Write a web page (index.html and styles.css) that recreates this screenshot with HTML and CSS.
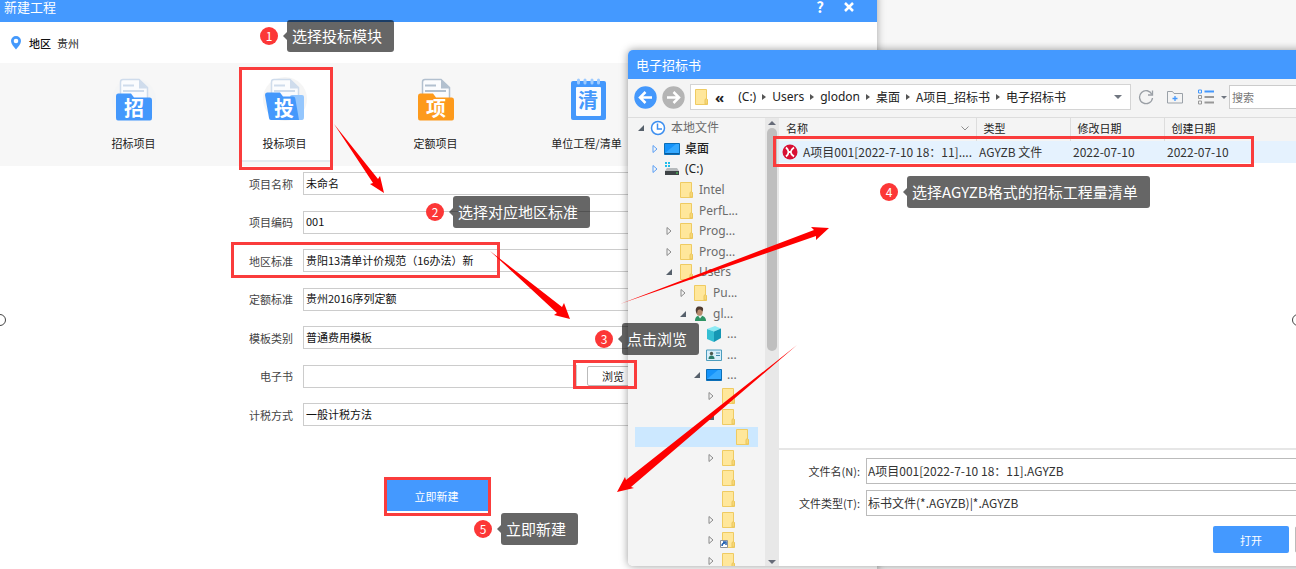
FILE: index.html
```html
<!DOCTYPE html>
<html lang="zh-CN">
<head>
<meta charset="utf-8">
<title>新建工程</title>
<link rel="stylesheet" href="styles.css">
</head>
<body>
<svg class="defs" aria-hidden="true">
  <symbol id="folder" viewBox="0 0 16 16">
    <path d="M2.500 .5h11v9.500l1 1v4.500h-12z" fill="#ffe79b" stroke="#efcb62"/>
    <path d="M12 15V10.500l1.200-.8 1.200.8V15z" fill="#f9d979" stroke="#eac65c"/>
  </symbol>
  <symbol id="screen" viewBox="0 0 16 16">
    <path d="M.5 2.500h15v11H.5z" fill="#1593fa" stroke="#0b6fb8"/>
    <path d="M1 12L12 3h3v9z" fill="#35a9ff"/>
    <path d="M1 12.500h14" stroke="#0a5c9e"/>
  </symbol>
  <symbol id="closed" viewBox="0 0 8 8"><path d="M2 .5v7L6 4z" fill="none" stroke="currentColor"/></symbol>
  <symbol id="opened" viewBox="0 0 8 8"><path d="M7 1v6H1z" fill="#56606b"/></symbol>
  <symbol id="page" viewBox="0 0 46 44">
    <path d="M9.500 24V5q0-2.500 2.500-2.500h16l8.500 8V26" fill="#fbfcfe" stroke="currentColor" stroke-width="1.500"/>
    <path d="M28 2l9 9.500h-9z" fill="currentColor"/>
    <path d="M12 8.500h11M12 14h21" stroke="currentColor" stroke-width="2"/>
  </symbol>
</svg>

<main class="desktop">
  <section class="window project">
    <header class="titlebar">
      <h1>新建工程</h1>
      <button class="help" type="button">?</button>
      <button class="close" type="button" aria-label="关闭">
        <svg width="10" height="10" viewBox="0 0 10 10"><path d="M1 1l8 8M9 1L1 9" stroke="#fff" stroke-width="2.500"/></svg>
      </button>
    </header>
    <div class="region">
      <svg width="10" height="14" viewBox="0 0 10 14"><path d="M5 0a5 5 0 0 1 5 5c0 3-3 6-5 8.500C3 11 0 8 0 5a5 5 0 0 1 5-5z" fill="#4499fc"/><circle cx="5" cy="5" r="2.300" fill="#fff"/></svg>
      <b>地区</b><span>贵州</span>
    </div>
    <nav class="kinds">
      <button class="kind" type="button">
        <svg width="46" height="46" viewBox="0 0 46 46">
          <circle cx="23" cy="23" r="22" fill="#f4f5f6"/>
          <g color="#cfdcec"><use href="#page" width="46" height="44"/></g>
          <path d="M5 19q0-2.500 2-2.500h13l3 4h16q2 0 2 2.500v18q0 2.500-2 2.500H7q-2 0-2-2.500z" fill="#4498fc"/>
          <text x="23" y="39" class="glyph">招</text>
        </svg>
        <span>招标项目</span>
      </button>
      <button class="kind active" type="button">
        <svg width="46" height="46" viewBox="0 0 46 46">
          <circle cx="23" cy="22" r="22" fill="#f5f5f5"/>
          <g color="#cfdcec"><use href="#page" width="46" height="44"/></g>
          <path d="M28 20q0-2 2-2h10q2 0 2 2v20q0 3-2 3H28z" fill="#94c6fd"/>
          <path d="M3 18q0-2.500 2-2.500h13l3 4h10q2 0 2.300 2L37 43H9q-2 0-2-2z" fill="#4498fc"/>
          <text x="22" y="39" class="glyph">投</text>
        </svg>
        <span>投标项目</span>
      </button>
      <button class="kind" type="button">
        <svg width="46" height="46" viewBox="0 0 46 46">
          <g color="#b2c0cf"><use href="#page" width="46" height="44"/></g>
          <path d="M5 19q0-2.500 2-2.500h13l3 4h16q2 0 2 2.500v18q0 2.500-2 2.500H7q-2 0-2-2.500z" fill="#fd9a1c"/>
          <text x="23" y="39" class="glyph">项</text>
        </svg>
        <span>定额项目</span>
      </button>
      <button class="kind" type="button">
        <svg width="46" height="46" viewBox="0 0 46 46">
          <rect x="7" y="4" width="35" height="39" rx="2" fill="#4498fc"/>
          <rect x="12" y="10" width="25" height="29" rx="1" fill="#fafcff"/>
          <path d="M14.500 3v3M21 3v3M28 3v3M34.500 3v3" stroke="#9ecbff" stroke-width="3" stroke-linecap="round"/>
          <text x="24" y="31" class="glyph blue">清</text>
        </svg>
        <span>单位工程/清单</span>
      </button>
    </nav>
    <form class="form">
      <div class="fields">
        <div class="field"><label for="name">项目名称</label><input id="name" type="text" value="未命名"></div>
        <div class="field"><label for="code">项目编码</label><input id="code" type="text" value="001"></div>
        <div class="field"><label for="area">地区标准</label><select id="area"><option>贵阳13清单计价规范（16办法）新</option></select></div>
        <div class="field"><label for="quota">定额标准</label><select id="quota"><option>贵州2016序列定额</option></select></div>
        <div class="field"><label for="template">模板类别</label><select id="template"><option>普通费用模板</option></select></div>
        <div class="field"><label for="book">电子书</label><input id="book" type="text"><button class="browse" type="button">浏览</button></div>
        <div class="field"><label for="tax">计税方式</label><select id="tax"><option>一般计税方法</option></select></div>
      </div>
      <button class="create" type="button">立即新建</button>
    </form>
  </section>

  <section class="window dialog">
    <header class="titlebar"><h2>电子招标书</h2></header>
    <div class="toolbar">
      <button type="button" aria-label="后退"><svg width="23" height="23" viewBox="0 0 23 23"><circle cx="11.500" cy="11.500" r="11.200" fill="#4498fc"/><path d="M18 11.500H6M11.500 6L6 11.500l5.500 5.500" fill="none" stroke="#fff" stroke-width="2.500"/></svg></button>
      <button type="button" aria-label="前进"><svg width="23" height="23" viewBox="0 0 23 23"><circle cx="11.500" cy="11.500" r="11.200" fill="#b4b4b4"/><path d="M5 11.500h12M11.500 6l5.500 5.500-5.500 5.500" fill="none" stroke="#fff" stroke-width="2.500"/></svg></button>
      <div class="path">
        <svg width="16" height="16"><use href="#folder"/></svg>
        <span class="more">«</span>
        <a class="latin" href="#">(C:)</a><i></i><a class="latin" href="#">Users</a><i></i><a class="latin" href="#">glodon</a><i></i><a href="#">桌面</a><i></i><a href="#">A项目_招标书</a><i></i><a href="#">电子招标书</a>
        <span class="drop"></span>
      </div>
      <div class="tools">
        <button type="button" aria-label="刷新"><svg width="16" height="16" viewBox="0 0 16 16"><path d="M14 5.500A6.500 6.500 0 1 0 14.500 9" fill="none" stroke="#9a9fa5" stroke-width="1.300"/><path d="M14.500 1.500v4.500H10" fill="none" stroke="#9a9fa5" stroke-width="1.300"/></svg></button>
        <button type="button" aria-label="新建文件夹"><svg width="16" height="14" viewBox="0 0 16 14"><path d="M.5 1.500h5l1.500 2h8.500v9.500H.5z" fill="none" stroke="#9aa1a8"/><path d="M8 6v5M5.500 8.500h5" stroke="#4498fc" stroke-width="1.300"/></svg></button>
        <button type="button" aria-label="视图"><svg width="16" height="16" viewBox="0 0 16 16"><path d="M.5 1h3v3h-3z" fill="none" stroke="#4498fc"/><path d="M6.500 2.500H16" stroke="#4498fc" stroke-width="2"/><path d="M.5 6.500h3v3h-3zM.5 12h3v3h-3z" fill="none" stroke="#989898"/><path d="M6.500 8H16M6.500 13.500H16" stroke="#989898" stroke-width="2"/></svg></button>
      </div>
      <span class="drop small"></span>
      <input class="search" type="text" placeholder="搜索" aria-label="搜索">
    </div>
    <div class="browser">
      <ul class="tree">
        <li><svg class="twist"><use href="#opened"/></svg><svg class="icon" viewBox="0 0 16 16"><circle cx="8" cy="8" r="6.500" fill="#fff" stroke="#3d8ff0" stroke-width="1.500"/><path d="M7.500 3.500V9H12" fill="none" stroke="#3d8ff0" stroke-width="1.500"/></svg>本地文件</li>
        <li class="l1"><svg class="twist blue"><use href="#closed"/></svg><svg class="icon"><use href="#screen"/></svg><b>桌面</b></li>
        <li class="l1"><svg class="twist blue"><use href="#closed"/></svg><svg class="icon" viewBox="0 0 16 16"><path d="M1 1h2v2H1zM4 1h2v2H4zM1 4h2v2H1zM4 4h2v2H4z" fill="#21bdea"/><path d="M3 7h10l2 3H1z" fill="#b6babc"/><path d="M1 10h14v4H1z" fill="#3f4447"/><path d="M12 12h2" stroke="#4ce05b"/></svg><span class="dark">(C:)</span></li>
        <li class="l2"><svg class="twist"></svg><svg class="icon"><use href="#folder"/></svg>Intel</li>
        <li class="l2"><svg class="twist"></svg><svg class="icon"><use href="#folder"/></svg>PerfL...</li>
        <li class="l2"><svg class="twist"><use href="#closed"/></svg><svg class="icon"><use href="#folder"/></svg>Prog...</li>
        <li class="l2"><svg class="twist"><use href="#closed"/></svg><svg class="icon"><use href="#folder"/></svg>Prog...</li>
        <li class="l2"><svg class="twist"><use href="#opened"/></svg><svg class="icon"><use href="#folder"/></svg>Users</li>
        <li class="l3"><svg class="twist"><use href="#closed"/></svg><svg class="icon"><use href="#folder"/></svg>Pu...</li>
        <li class="l3"><svg class="twist"><use href="#opened"/></svg><svg class="icon" viewBox="0 0 16 16"><path d="M3 15c0-4 2-5.500 5-5.500S14 11 14 15z" fill="#2f9465"/><path d="M6 9.500l2 3 2.500-3z" fill="#e8f3ee"/><ellipse cx="7.500" cy="5.500" rx="3.200" ry="4.300" fill="#b98a6d"/><path d="M4 6C3 2 5 0 8 .5s4 2 2.500 5C9 3 7 3 6 4c-1 1-.5 3-1 4z" fill="#4e3a30"/></svg>gl...</li>
        <li class="l4"><svg class="twist"></svg><svg class="icon" viewBox="0 0 16 16"><path d="M1 3l8-3 6 2.500-7 3z" fill="#8ceaf4"/><path d="M1 3l7 2.500V16l-7-3z" fill="#35bfd3"/><path d="M8 5.500l7-3V12l-7 4z" fill="#1597b4"/></svg>...</li>
        <li class="l4"><svg class="twist"></svg><svg class="icon" viewBox="0 0 16 16"><path d="M.5 3h15v10.500H.5z" fill="#d9effa" stroke="#4c9cbd"/><circle cx="5.500" cy="6.500" r="1.700" fill="#4e5a4f"/><path d="M2.500 12q0-3.500 3-3.500t3 3.500z" fill="#2b7c6b"/><path d="M10 6h4M10 8.500h4" stroke="#3d89ae"/></svg>...</li>
        <li class="l4"><svg class="twist"><use href="#opened"/></svg><svg class="icon"><use href="#screen"/></svg>...</li>
        <li class="l5"><svg class="twist"><use href="#closed"/></svg><svg class="icon"><use href="#folder"/></svg></li>
        <li class="l5"><svg class="twist"><use href="#opened"/></svg><svg class="icon"><use href="#folder"/></svg></li>
        <li class="l6 selected"><svg class="twist"></svg><svg class="icon"><use href="#folder"/></svg></li>
        <li class="l5"><svg class="twist"><use href="#closed"/></svg><svg class="icon"><use href="#folder"/></svg></li>
        <li class="l5"><svg class="twist"></svg><svg class="icon"><use href="#folder"/></svg></li>
        <li class="l5"><svg class="twist"></svg><svg class="icon"><use href="#folder"/></svg></li>
        <li class="l5"><svg class="twist"><use href="#closed"/></svg><svg class="icon"><use href="#folder"/></svg></li>
        <li class="l5"><svg class="twist"><use href="#closed"/></svg><svg class="icon" viewBox="0 0 16 16"><use href="#folder"/><path d="M.5 8.500h7v7h-7z" fill="#fff" stroke="#8c9299"/><path d="M2 14q0-3 3-3M3 10h3v3" fill="none" stroke="#2562b0" stroke-width="1.500"/></svg></li>
        <li class="l5"><svg class="twist"><use href="#closed"/></svg><svg class="icon"><use href="#folder"/></svg></li>
      </ul>
      <div class="scroll"><span class="up"></span><span class="track"><span class="thumb"></span></span><span class="down"></span></div>
      <div class="content">
        <div class="list">
          <table>
            <colgroup><col class="c-name"><col class="c-mid"><col class="c-mid"><col></colgroup>
            <thead><tr><th><span class="sort">名称<svg width="8" height="5" viewBox="0 0 8 5"><path d="M.5 .5L4 4 7.500 .5" fill="none" stroke="#8f8f8f"/></svg></span></th><th>类型</th><th>修改日期</th><th>创建日期</th></tr></thead>
            <tbody><tr><td><span class="file"><svg width="16" height="16" viewBox="0 0 16 16"><circle cx="8" cy="8" r="7.500" fill="#d80f35"/><path d="M4 3.500Q9 8 4 12.500M12 3.500Q5.500 8 12 12.500M5.500 8h3" fill="none" stroke="#fff" stroke-width="1.800"/></svg>A项目001[2022-7-10 18：11]....</span></td><td>AGYZB 文件</td><td>2022-07-10</td><td>2022-07-10</td></tr></tbody>
          </table>
        </div>
        <form class="footer">
          <div class="line"><label for="file">文件名(N):</label><input id="file" type="text" value="A项目001[2022-7-10 18：11].AGYZB"></div>
          <div class="line"><label for="type">文件类型(T):</label><select id="type"><option>标书文件(*.AGYZB)|*.AGYZB</option></select></div>
          <div class="actions"><button class="open" type="button">打开</button><button class="cancel" type="button" aria-label="取消"></button></div>
        </form>
      </div>
    </div>
  </section>

  <div class="frame f-kind"></div>
  <div class="frame f-area"></div>
  <div class="frame f-browse"></div>
  <div class="frame f-create"></div>
  <div class="frame f-file"></div>

  <svg class="arrows" width="1296" height="569" viewBox="0 0 1296 569" aria-hidden="true">
    <g fill="#fe0000">
      <path d="M334 124L378 179L380 176L384 193L370 184L373 183z"/>
      <path d="M490 251L562 307L564 303L570 319L554 315L557 313z"/>
      <path d="M620 304L814 230L811 227L829 228L816 240L816 236z"/>
      <path d="M797 345L631 487L634 488L617 492L625 477L626 480z"/>
    </g>
    <g fill="#fff" stroke="#444"><circle cx="0" cy="320" r="5.500"/><circle cx="1298" cy="320" r="5.500"/></g>
  </svg>

  <div class="note n1"><span class="num">1</span><span class="tip">选择投标模块</span></div>
  <div class="note n2"><span class="num">2</span><span class="tip">选择对应地区标准</span></div>
  <div class="note n3"><span class="num">3</span><span class="tip">点击浏览</span></div>
  <div class="note n4"><span class="num">4</span><span class="tip">选择AGYZB格式的招标工程量清单</span></div>
  <div class="note n5"><span class="num">5</span><span class="tip">立即新建</span></div>
</main>
</body>
</html>
```

FILE: styles.css
```css
* { box-sizing: border-box; }
html, body { height: 100%; }
body {
  margin: 0;
  overflow: hidden;
  background: #f7f7f7;
  color: #222;
  font: 12px/16px "Noto Sans CJK SC", "Noto Sans", sans-serif;
}
button, input, select { margin: 0; font: inherit; color: inherit; }
button { padding: 0; border: 0; background: none; }
svg { display: block; flex: none; }
a { color: inherit; text-decoration: none; }
.defs { position: absolute; width: 0; height: 0; }
.desktop { position: relative; height: 100%; overflow: hidden; }

.window { position: absolute; display: flex; flex-direction: column; background: #fff; }
.titlebar { display: flex; align-items: center; background: #4499ff; color: #fff; line-height: 14px; }
.titlebar h1, .titlebar h2 { flex: 1; margin: 0; font-size: 13px; font-weight: 400; }

/* new project window */
.project { top: -8px; bottom: -20px; left: 0; width: 877px; box-shadow: 0 0 8px rgba(0, 0, 0, .35); }
.project .titlebar { height: 30px; padding: 0 23px 0 4px; gap: 20px; }
.help { font-size: 15px; font-weight: 700; line-height: 14px; color: #fff; }
.region { display: flex; align-items: center; gap: 6px; height: 41px; padding-left: 11px; font-size: 11px; }
.region svg { margin-right: 2px; }
.region b { font-weight: 500; color: #111; }
.kinds { display: flex; gap: 60px; height: 103px; padding: 6px 88px 0; background: #f7f7f7; }
.kind {
  display: flex; flex-direction: column; align-items: center; gap: 12px;
  flex: none; width: 91px; height: 93px; padding-top: 8px;
  white-space: nowrap; border-bottom: 2px solid transparent;
}
.kind span { line-height: 16px; font-size: 11px; }
.kind.active { background: #fff; border-color: #e4eaef; }
.glyph { font-size: 20px; font-weight: 700; fill: #fff; text-anchor: middle; }
.glyph.blue { fill: #4498fc; }

.form { display: flex; flex-direction: column; align-items: center; gap: 54px; padding-top: 6px; font-size: 11px; }
.fields { display: flex; flex-direction: column; justify-content: space-between; height: 254px; width: 100%; padding-right: 238px; }
.field { display: flex; align-items: center; height: 23px; }
.field label { width: 293px; margin-right: 10px; text-align: right; color: #444; }
.field input, .field select {
  flex: 1; min-width: 0; height: 23px; padding: 0 2px 2px;
  border: 1px solid #ccc; border-radius: 0; background: #fff; appearance: none; color: #111;
}
.browse { width: 52px; height: 20px; margin-left: 10px; border: 1px solid #bbb; border-radius: 2px; background: #fff; }
.create { width: 106px; height: 31px; margin-right: 4px; background: #4499ff; color: #fff; }

/* open file dialog */
.dialog { top: 50px; bottom: 3px; left: 628px; right: -90px; border-radius: 5px; overflow: hidden; box-shadow: 0 0 8px rgba(0, 0, 0, .4); }
.dialog .titlebar { flex: none; height: 29px; padding-left: 8px; }
.toolbar {
  display: flex; align-items: center; flex: none; gap: 5px; height: 39px;
  padding: 0 8px 2px 6px; background: #f4f4f4; border-bottom: 1px solid #ddd;
}
.path {
  display: flex; align-items: center; flex: 1; gap: 6px; height: 26px; padding: 0 8px 0 2px;
  background: #fff; border: 1px solid #d4d4d4; white-space: nowrap;
}
.more { margin-right: 8px; font: 700 15px/16px "Noto Sans", sans-serif; }
.latin { font: 12px/16px "Noto Sans", sans-serif; }
.path i { border: 3px solid transparent; border-left: 4px solid #555; border-right: 0; }
.drop { border: 4px solid transparent; border-top: 4px solid #707680; border-bottom: 0; }
.drop.small { border-width: 3px 3px 0; }
.path .drop { margin-left: auto; }
.tools { display: flex; align-items: center; gap: 13px; padding: 0 2px; }
.tools button:last-child { margin-left: 2px; }
.search { width: 149px; height: 24px; margin-left: -3px; padding: 0 2px; border: 1px solid #ccc; background: #fff; font-size: 11px; }
.search::placeholder { color: #777; }

.browser { display: flex; flex: 1; min-height: 0; }
.tree {
  display: grid; grid-auto-rows: 1fr; flex: none; width: 137px; height: 453px;
  margin: 0; padding: 0 7px; background: #f4f4f4; list-style: none;
  font: 12px/16px "Noto Sans", "Noto Sans CJK SC", sans-serif; color: #6b6b6b;
}
.tree li { display: flex; align-items: center; }
.tree b, .dark { font-weight: 500; color: #222; }
.dark { font-weight: 400; }
.twist { width: 8px; height: 8px; margin: 0 5px 0 2px; color: #8a8a8a; }
.twist.blue { color: #5b9ff5; }
.icon { width: 16px; height: 16px; margin-right: 5px; }
.l1 { padding-left: 14px; }
.l2 { padding-left: 28px; }
.l3 { padding-left: 42px; }
.l4 { padding-left: 56px; }
.l5 { padding-left: 70px; }
.l6 { padding-left: 84px; }
.selected { background: #cce8ff; }

.scroll { display: flex; flex-direction: column; align-items: center; flex: none; width: 14px; padding: 3px 0 2px; background: #e8e8e8; }
.up { border: 4px solid transparent; border-bottom-color: #666b78; border-top: 0; }
.down { border: 4px solid transparent; border-top-color: #666b78; border-bottom: 0; }
.track { flex: 1; width: 10px; padding: 3px 0; }
.thumb { display: block; height: 52%; border-radius: 5px; background: #bfbfbf; }

.content { display: flex; flex-direction: column; flex: 1; min-width: 0; }
.list { flex: 1; }
table { width: 100%; table-layout: fixed; border-collapse: collapse; }
.c-name { width: 197px; }
.c-mid { width: 94px; }
th { height: 23px; padding: 0 7px 3px; text-align: left; font-weight: 400; background: #f4f4f4; border-right: 1px solid #ddd; font-size: 11px; }
td { height: 22px; padding: 0 3px; background: #e5f2fe; white-space: nowrap; color: #333; }
.sort { display: flex; align-items: center; justify-content: space-between; }
.file { display: flex; align-items: center; gap: 5px; }

.footer { display: flex; flex-direction: column; gap: 6px; padding: 8px 15px 13px 0; border-top: 2px solid #e6e6e6; color: #333; }
.line { display: flex; align-items: center; font-size: 12px; }
.line label { width: 81px; margin-right: 6px; text-align: right; font-size: 11px; }
.line input, .line select { flex: 1; min-width: 0; height: 26px; padding: 0 1px 1px; border: 1px solid #bbb; border-radius: 0; background: #fff; appearance: none; }
.actions { display: flex; justify-content: flex-end; gap: 6px; padding-top: 4px; }
.actions button { width: 76px; height: 27px; border-radius: 2px; font-size: 11px; }
.open { background: #4499ff; color: #fff; }
.actions .cancel { border: 1px solid #bbb; background: #fff; }

/* guide annotations */
.frame { position: absolute; border: 3px solid #fa3c3c; }
.f-kind { left: 239px; top: 67px; width: 94px; height: 103px; }
.f-area { left: 231px; top: 242px; width: 269px; height: 36px; }
.f-browse { left: 573px; top: 360px; width: 64px; height: 29px; }
.f-create { left: 384px; top: 477px; width: 107px; height: 39px; }
.f-file { left: 773px; top: 136px; width: 481px; height: 31px; }
.arrows { position: absolute; left: 0; top: 0; }
.note { position: absolute; display: flex; align-items: center; gap: 9px; }
.num { width: 18px; height: 18px; border-radius: 50%; background: #fc3737; color: #fff; font-size: 12px; line-height: 17px; text-align: center; }
.tip { position: relative; padding: 0 12px 0 5px; border-radius: 3px; background: rgba(0, 0, 0, .6); color: #fff; font-size: 15px; line-height: 32px; white-space: nowrap; }
.tip::before { content: ""; position: absolute; left: -4px; top: 12px; border: 4px solid transparent; border-right-color: rgba(0, 0, 0, .6); border-left: 0; }
.n1 { left: 260px; top: 20px; }
.n2 { left: 426px; top: 196px; }
.n3 { left: 595px; top: 323px; }
.n4 { left: 880px; top: 176px; }
.n5 { left: 474px; top: 513px; }
```
